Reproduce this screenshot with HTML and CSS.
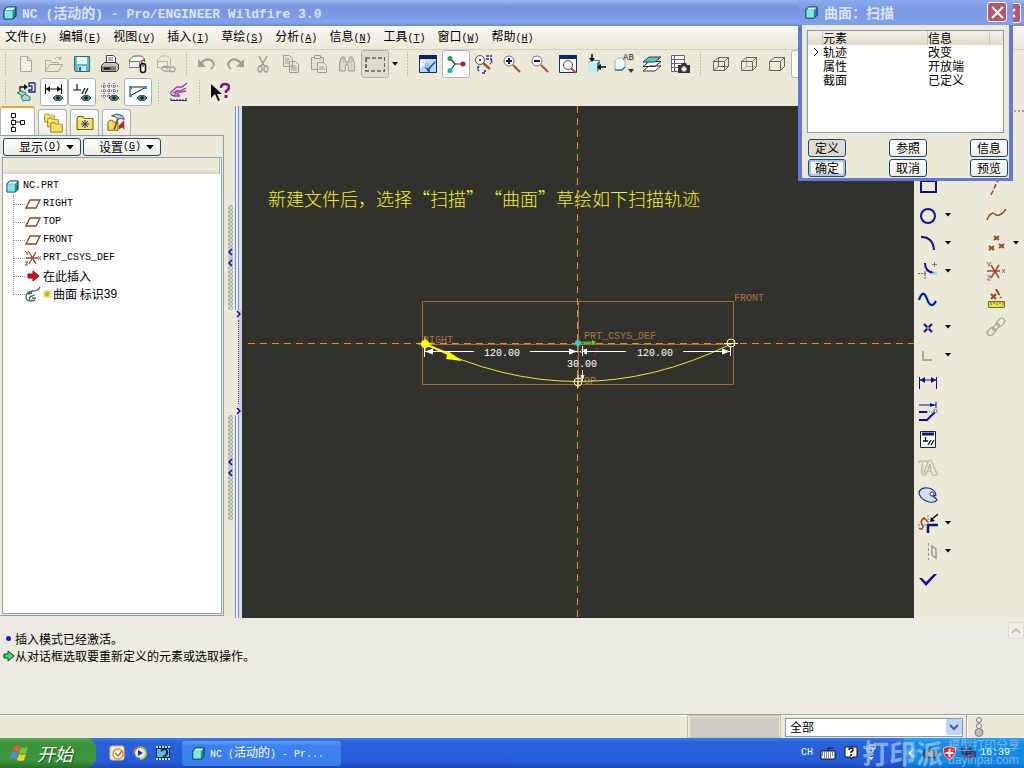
FILE: index.html
```html
<!DOCTYPE html>
<html lang="zh-CN">
<head>
    <meta charset="UTF-8">
    <meta name="viewport" content="width=device-width, initial-scale=1.0">
    <title>NC (活动的) - Pro/ENGINEER Wildfire 3.0</title>
    <link rel="stylesheet" href="styles.css">
</head>
<body>
    <!-- shared icons -->
    <svg class="sprite" aria-hidden="true">
        <symbol id="part" viewBox="0 0 14 14">
            <path d="M1 4l3-3h9v9l-3 3H1z" fill="#2a8f93" stroke="#123"/>
            <path d="M1.500 4.500h8v8h-8z" fill="#7fe9e4"/>
            <path d="M2 4l2-2.500h8.500L10 4z" fill="#d8ffff"/>
        </symbol>
        <symbol id="plane" viewBox="0 0 16 12">
            <path d="M5 2h10l-4 8H1z" fill="#fff" stroke="#8a4a28" stroke-width="1.300"/>
        </symbol>
        <symbol id="eye" viewBox="0 0 10 6">
            <path d="M0 3q5-6 10 0q-5 6-10 0z" fill="#5d8a8a" stroke="#244"/>
            <circle cx="5" cy="3" r="1.800" fill="#023"/>
        </symbol>
        <symbol id="arrow" viewBox="0 0 6 4">
            <path d="M0 0h6L3 3.500z" fill="#000"/>
        </symbol>
        <symbol id="folder" viewBox="0 0 18 15">
            <path d="M1 3l1-2h5l1 2h9v11H1z" fill="#f4e05a" stroke="#6b6010"/>
            <path d="M2 4h14" stroke="#fffbc0"/>
        </symbol>
        <symbol id="fold" viewBox="0 0 5 18">
            <path d="M4 1L1 4l3 3M4 12l-3 3 3 3" fill="none" stroke="#10108c" stroke-width="1.500"/>
        </symbol>
        <symbol id="unfold" viewBox="0 0 5 8">
            <path d="M1 1l3 3-3 3" fill="none" stroke="#10108c" stroke-width="1.500"/>
        </symbol>
    </svg>

    <header class="titlebar">
        <svg class="app-icon" viewBox="0 0 14 14"><use href="#part"/></svg>
        <h1><span class="en">NC (</span>活动的<span class="en">) - Pro/ENGINEER Wildfire 3.0</span></h1>
        <button class="close" aria-label="关闭窗口"><svg viewBox="0 0 12 12"><path d="M2 2l8 8M10 2l-8 8" stroke="#fff" stroke-width="2"/></svg></button>
    </header>

    <nav class="menubar">
        <button>文件<span class="en">(<u>F</u>)</span></button>
        <button>编辑<span class="en">(<u>E</u>)</span></button>
        <button>视图<span class="en">(<u>V</u>)</span></button>
        <button>插入<span class="en">(<u>I</u>)</span></button>
        <button>草绘<span class="en">(<u>S</u>)</span></button>
        <button>分析<span class="en">(<u>A</u>)</span></button>
        <button>信息<span class="en">(<u>N</u>)</span></button>
        <button>工具<span class="en">(<u>T</u>)</span></button>
        <button>窗口<span class="en">(<u>W</u>)</span></button>
        <button>帮助<span class="en">(<u>H</u>)</span></button>
    </nav>

    <div class="toolbars">
        <div class="toolbar">
            <i class="handle"></i>
            <button class="tool" aria-label="新建"><svg viewBox="0 0 20 20"><path d="M4.500 2.500h7l4 4v11h-11zM11.500 2.500v4h4" fill="#f2f0e4" stroke="#aaa89c"/></svg></button>
            <button class="tool" aria-label="打开"><svg viewBox="0 0 20 20"><path d="M1.500 17.500v-11h5l1 2h7v2M1.500 17.500l4-7h13l-4 7zM11 5q3-4 6 0M17 2v3h-3" fill="none" stroke="#aaa89c"/></svg></button>
            <button class="tool" aria-label="保存"><svg viewBox="0 0 20 20"><path d="M2.500 2.500h15v15h-14l-1-1z" fill="#62bcc0" stroke="#2a6b75"/><path d="M5 3h10v7H5z" fill="#e8f6f6"/><path d="M6 12h8v5H6z" fill="#cde"/><path d="M7 13h2v4H7z" fill="#2a6b75"/></svg></button>
            <button class="tool" aria-label="打印"><svg viewBox="0 0 20 20"><path d="M6.500 9V1.500h7l2 2V9" fill="#fff" stroke="#444"/><path d="M8 4h5M8 6h5" stroke="#667"/><path d="M1.500 11.500l3-3h11l3 2v5l-2 2h-15z" fill="#c4c4c0" stroke="#333"/><path d="M2 12.500h14v4H2z" fill="#77776f"/><path d="M4 14.500h6" stroke="#111" stroke-width="2"/><path d="M12 14.500h2" stroke="#e44"/></svg></button>
            <button class="tool" aria-label="发送邮件"><svg viewBox="0 0 20 20"><path d="M1.500 13.500V6l4-4h8l3 3v3" fill="#f7f7f4" stroke="#555"/><path d="M1.500 7.500h10v6h-10" fill="#eee" stroke="#777"/><path d="M16 6q-5 1-1 5" fill="none" stroke="#c22" stroke-width="1.500"/><rect x="12.500" y="9.500" width="5" height="9" rx="2.500" fill="#fff" stroke="#111" stroke-width="1.500"/><path d="M15 10v3" stroke="#111"/></svg></button>
            <button class="tool" aria-label="发送链接"><svg viewBox="0 0 20 20"><path d="M1.500 13.500V6l4-4h6l3 3v7M1.500 7.500h10v6h-10" fill="none" stroke="#b2b0a4"/><path d="M6 15q0-2.500 3-2.500h3q2 0 2 2.500t-2 2H9q-3 0-3-2zM11 15q0-2 2-2h3q3 0 3 2.500t-3 2h-3" fill="none" stroke="#a5a398" stroke-width="1.300"/></svg></button>
            <i class="sep"></i>
            <button class="tool" aria-label="撤消"><svg viewBox="0 0 20 20"><path d="M4 9q6-6 11-2 4 4-1 8" fill="none" stroke="#a09e93" stroke-width="2"/><path d="M1 5v8h8z" fill="#a09e93"/></svg></button>
            <button class="tool" aria-label="重做"><svg viewBox="0 0 20 20"><path d="M16 9q-6-6-11-2-4 4 1 8" fill="none" stroke="#a09e93" stroke-width="2"/><path d="M19 5v8h-8z" fill="#a09e93"/></svg></button>
            <button class="tool" aria-label="剪切"><svg viewBox="0 0 20 20"><path d="M6 2l6 11M14 2L8 13" stroke="#a09e93" stroke-width="1.500"/><ellipse cx="7" cy="15" rx="2" ry="3" fill="none" stroke="#a09e93" stroke-width="1.300"/><ellipse cx="13" cy="15" rx="2" ry="3" fill="none" stroke="#a09e93" stroke-width="1.300"/></svg></button>
            <button class="tool" aria-label="复制"><svg viewBox="0 0 20 20"><path d="M2.500 1.500h6l3 3v8h-9zM8.500 7.500h6l3 3v8h-9z" fill="#e8e6da" stroke="#a09e93"/><path d="M4 5h5M4 7h4M4 9h4M10 12h5M10 14h6M10 16h6" stroke="#a09e93"/></svg></button>
            <button class="tool" aria-label="粘贴"><svg viewBox="0 0 20 20"><path d="M2.500 3.500h12v12h-12z" fill="#e4e2d6" stroke="#a09e93"/><path d="M5.500 1.500h6v3h-6zM8.500 8.500h6l3 3v7h-9z" fill="#e8e6da" stroke="#a09e93"/><path d="M10 13h5M10 15h6" stroke="#a09e93"/></svg></button>
            <button class="tool" aria-label="查找"><svg viewBox="0 0 20 20"><path d="M2.500 9l2-6h3l1 5h3l1-5h3l2 6v8h-6v-6h-3v6h-6z" fill="#c9c7bb" stroke="#a09e93"/><path d="M5 6v10M7 9v7M13 9v7M16 8v8" stroke="#f4f2e8"/></svg></button>
            <button class="tool pressed" aria-label="选取框"><svg viewBox="0 0 20 20"><path d="M1 4h19v13H1z" fill="none" stroke="#222" stroke-width="1.200" stroke-dasharray="4 2"/></svg></button>
            <button class="drop" aria-label="选取选项"><svg viewBox="0 0 6 4"><use href="#arrow"/></svg></button>
            <i class="sep"></i>
            <button class="tool" aria-label="重画"><svg viewBox="0 0 20 20"><path d="M1.500 1.500h17v17h-17z" fill="#b8d8ee" stroke="#14306c"/><path d="M1 1h18v4H1z" fill="#0b2568"/><path d="M2 6h9L2 15z" fill="#f4fbff"/><path d="M10 18q-1-3-4-5l4 1 7-7 1 1-6 7v3z" fill="#2660ac"/><path d="M5 8l4 5M8 7l2 5" stroke="#3778b5" stroke-dasharray="1 1"/></svg></button>
            <button class="tool checked" aria-label="旋转中心"><svg viewBox="0 0 20 20"><path d="M4 4l5 6-5 7M9 10h8" fill="none" stroke="#333" stroke-width="1.200"/><circle cx="4" cy="4.500" r="2.500" fill="#1da33a"/><circle cx="4" cy="16.500" r="2.500" fill="#19bba4"/><circle cx="17" cy="10" r="2.500" fill="#b21a22"/></svg></button>
            <button class="tool" aria-label="定向模式"><svg viewBox="0 0 20 20"><circle cx="6" cy="6" r="4.500" fill="#eee" stroke="#555"/><circle cx="6" cy="6" r="1" fill="#111"/><path d="M9 9l7 6" stroke="#a3552c" stroke-width="2.500"/><path d="M12 2h6M12 5h6M17 6q2 2-1 4M5 12q-3 3 0 5M8 19h3v-3" fill="none" stroke="#1a2a9c" stroke-width="1.500" stroke-dasharray="3 1"/></svg></button>
            <button class="tool" aria-label="放大"><svg viewBox="0 0 20 20"><circle cx="7" cy="7" r="5" fill="#f4f8fb" stroke="#777"/><path d="M4 7h6M7 4v6" stroke="#111a50" stroke-width="2"/><path d="M11 11l7 7" stroke="#9a5634" stroke-width="2"/></svg></button>
            <button class="tool" aria-label="缩小"><svg viewBox="0 0 20 20"><circle cx="7" cy="7" r="5" fill="#f4f8fb" stroke="#777"/><path d="M4 7h6" stroke="#111a50" stroke-width="2"/><path d="M11 11l7 7" stroke="#9a5634" stroke-width="2"/></svg></button>
            <button class="tool" aria-label="重新调整"><svg viewBox="0 0 20 20"><path d="M1.500 1.500h17v17h-17z" fill="#fff" stroke="#14306c"/><path d="M1 1h18v4H1z" fill="#0b2568"/><circle cx="10" cy="11" r="4.500" fill="#eef3f5" stroke="#555"/><path d="M13 14l5 5" stroke="#8d5b43" stroke-width="2"/></svg></button>
            <button class="tool" aria-label="重定向"><svg viewBox="0 0 20 20"><path d="M2 9l3-3h9v9l-3 3H2z" fill="#2f9297"/><path d="M2 9h9v9H2z" fill="#b7f0ef"/><path d="M3 9l2-2h8l-2 2z" fill="#e8ffff"/><path d="M6 0v6M20 13h-7" stroke="#111" stroke-width="1.500"/><path d="M3 4h6L6 8zM15 10v6l-4-3z" fill="#111"/></svg></button>
            <button class="tool" aria-label="已命名视图"><svg viewBox="0 0 20 20"><path d="M1 7l3-3h7v9l-3 3H1z" fill="#e9fbfb" stroke="#9db5b8"/><path d="M1 16h7l3-3" fill="none" stroke="#3c7c80" stroke-width="1.500"/><text class="glyph" x="9" y="6">AB</text><path d="M14 15h6l-3 4z" fill="#333"/></svg></button>
            <button class="tool" aria-label="图层"><svg viewBox="0 0 20 20"><path d="M1 17l6-5h12l-6 5zM1 12.500l6-5h12l-6 5z" fill="#fff" stroke="#333"/><path d="M1 8l6-5h12l-6 5z" fill="#5ac9bd" stroke="#245"/></svg></button>
            <button class="tool" aria-label="视图管理器"><svg viewBox="0 0 20 20"><path d="M1.500 1.500h13v16h-13zM4.500 2v15M1.500 5.500h13M1.500 9.500h13M1.500 13.500h13" fill="#fff" stroke="#666"/><path d="M8 11h3l1-2h4l1 2h3v8H8z" fill="#333"/><circle cx="14" cy="15" r="2.500" fill="#eee" stroke="#999"/></svg></button>
            <i class="sep"></i>
            <button class="tool" aria-label="线框"><svg viewBox="0 0 20 20"><path d="M2.500 7.500h11v9h-11zM7.500 3.500h10v9h-10zM2.500 7.500l5-4M13.500 7.500l4-4M13.500 16.500l4-4M2.500 16.500l5-4" fill="none" stroke="#66645c"/></svg></button>
            <button class="tool" aria-label="隐藏线"><svg viewBox="0 0 20 20"><path d="M7.500 4v8.500h10M2.500 16.500l5-4" fill="none" stroke="#b0aea2"/><path d="M2.500 7.500h11v9h-11zM2.500 7.500l5-4h10v9l-4 4M13.500 7.500l4-4" fill="none" stroke="#66645c"/></svg></button>
            <button class="tool" aria-label="无隐藏线"><svg viewBox="0 0 20 20"><path d="M2.500 7.500h11v9h-11zM2.500 7.500l5-4h10v9l-4 4M13.500 7.500l4-4" fill="none" stroke="#66645c"/></svg></button>
            <button class="tool checked shade" aria-label="着色"><svg viewBox="0 0 14 14"><use href="#part"/></svg></button>
        </div>
        <div class="toolbar">
            <i class="handle"></i>
            <button class="tool" aria-label="草绘方向"><svg viewBox="0 0 20 20"><path d="M4 9V5h5" fill="none" stroke="#111" stroke-width="1.300"/><path d="M8 2l4 3-4 3z" fill="#111"/><path d="M13 1h6v9h-6V8h3V4h-3z" fill="#fff" stroke="#142a86" stroke-width="1.300"/><path d="M1 11l4-2 5 2-3 3zM5 15l4-3 5 3v3l-7 1z" fill="#9ddcd8" stroke="#377"/></svg></button>
            <button class="tool checked" aria-label="显示尺寸"><svg viewBox="0 0 20 20"><path d="M1.500 2v10M17.500 2v10M2 7h15" stroke="#111"/><path d="M2 7l4-3v6zM17 7l-4-3v6z" fill="#111"/><use href="#eye" x="9" y="13" width="10" height="6"/></svg></button>
            <button class="tool checked" aria-label="显示约束"><svg viewBox="0 0 20 20"><path d="M1 8h8M5 2v6M10 12l3-6M13 12l3-6" stroke="#111" stroke-width="1.200"/><use href="#eye" x="9" y="13" width="10" height="6"/></svg></button>
            <button class="tool" aria-label="显示栅格"><svg viewBox="0 0 20 20"><path d="M1 4h17M1 9h17M1 14h10M4 1v16M9 1v16M14 1v11" stroke="#2c2c70" stroke-dasharray="1 1"/><use href="#eye" x="9" y="13" width="10" height="6"/></svg></button>
            <button class="tool checked" aria-label="显示顶点"><svg viewBox="0 0 20 20"><path d="M2 5h16L2 14z" fill="none" stroke="#222"/><path d="M1 4h3v3H1zM16 4h3v3h-3zM1 12h3v3H1z" fill="#2f91c9"/><use href="#eye" x="9" y="13" width="10" height="6"/></svg></button>
            <i class="sep"></i>
            <button class="tool" aria-label="曲面分析"><svg viewBox="0 0 20 20"><path d="M2 10l6-5h5l5-4M2 10q-1 3 3 4h6M5 14l3-5h3l6-3M4 11l5-3M11 14l-3-2 3-2 6-1" fill="none" stroke="#a03ca8" stroke-width="1.300"/><path d="M2 16v3M5 17v2M8 17v2M11 17v2M14 17v2M17 16v3M2 18.500h16" stroke="#335"/></svg></button>
            <i class="sep"></i>
            <button class="tool" aria-label="上下文帮助"><svg viewBox="0 0 20 20"><path d="M1 2v14l4-4 3 7 2-1-3-6h5z" fill="#111"/><path d="M11 6q0-4 4-4t4 3.500q0 2-3 3.500v2" fill="none" stroke="#7c1583" stroke-width="2.500"/><path d="M14.500 13h3v3h-3z" fill="#7c1583"/></svg></button>
        </div>
    </div>

    <main class="workspace">
        <aside class="navigator">
            <div class="tabs">
                <button class="tab active" aria-label="模型树"><svg viewBox="0 0 18 20"><path d="M4 3v14M4 10h8" stroke="#222"/><path d="M2.500 1.500h4v4h-4zM2.500 8.500h4v4h-4zM2.500 15.500h4v4h-4zM11.500 8.500h4v4h-4z" fill="#fff" stroke="#111"/></svg></button>
                <button class="tab" aria-label="文件夹浏览器"><svg viewBox="0 0 20 20"><use href="#folder" x="1" y="0" width="11" height="10"/><use href="#folder" x="4" y="4" width="12" height="11"/><use href="#folder" x="7" y="9" width="13" height="11"/></svg></button>
                <button class="tab" aria-label="收藏夹"><svg viewBox="0 0 20 20"><use href="#folder" x="1" y="2" width="18" height="16"/><path d="M10 7v8M6 11h8M7 8l6 6M13 8l-6 6" stroke="#1729b0"/></svg></button>
                <button class="tab" aria-label="连接"><svg viewBox="0 0 22 20"><path d="M1 9l2-2h3l1 2h5v9H1z" fill="#f4e05a" stroke="#6b6010"/><path d="M5 2l6-2 6 2 2 4-4-1-3 1-3-3z" fill="#bcd" stroke="#345"/><path d="M12 5l-4 12" stroke="#964f2c" stroke-width="2"/><path d="M13 13l6-6v11l-2-3-4 2z" fill="#b5262a"/></svg></button>
            </div>
            <div class="nav-body">
                <div class="nav-buttons">
                    <button>显示<span class="en">(<u>O</u>)</span><svg viewBox="0 0 6 4"><use href="#arrow"/></svg></button>
                    <button>设置<span class="en">(<u>G</u>)</span><svg viewBox="0 0 6 4"><use href="#arrow"/></svg></button>
                </div>
                <div class="tree">
                    <div class="tree-head"></div>
                    <div class="tree-root"><svg viewBox="0 0 14 14"><use href="#part"/></svg><span class="en">NC.PRT</span></div>
                    <ul>
                        <li><svg viewBox="0 0 16 12"><use href="#plane"/></svg><span class="en">RIGHT</span></li>
                        <li><svg viewBox="0 0 16 12"><use href="#plane"/></svg><span class="en">TOP</span></li>
                        <li><svg viewBox="0 0 16 12"><use href="#plane"/></svg><span class="en">FRONT</span></li>
                        <li><svg viewBox="0 0 16 16"><path d="M1 8h12M4 2l7 12M11 2L4 14" stroke="#9a5026" stroke-width="1.300"/><path d="M0 1l2 2 2-2M2 3v2M0 12h3l-3 3h3M13 6l3 4M16 6l-3 4" fill="none" stroke="#666"/></svg><span class="en">PRT_CSYS_DEF</span></li>
                        <li><svg viewBox="0 0 16 16"><path d="M3 6h5V3l6 5-6 5v-3H3z" fill="#d5131b" stroke="#7b0a10"/></svg>在此插入</li>
                        <li><svg viewBox="0 0 16 16"><path d="M1 11q0-5 7-6 5 0 7-4M1 11q0 4 5 4l4-1M5 14q-2-3 2-4l3-1M3 8l4-1M7 12h4" fill="none" stroke="#3c6468" stroke-width="1.300"/></svg><svg class="star" viewBox="0 0 8 8"><path d="M4 0v8M0 4h8M1 1l6 6M7 1L1 7" stroke="#c5ba00" stroke-width="1.200"/></svg>曲面 标识<span class="num">39</span></li>
                    </ul>
                </div>
            </div>
        </aside>

        <div class="sash">
            <div class="sash-left">
                <button class="grip" aria-label="折叠导航器"><svg viewBox="0 0 5 18"><use href="#fold"/></svg></button>
                <button class="grip" aria-label="折叠浏览器"><svg viewBox="0 0 5 18"><use href="#fold"/></svg></button>
            </div>
            <div class="sash-right">
                <button class="expand" aria-label="展开浏览器"><svg viewBox="0 0 5 8"><use href="#unfold"/></svg><i></i><svg viewBox="0 0 5 8"><use href="#unfold"/></svg></button>
            </div>
        </div>

        <section class="canvas">
            <svg viewBox="0 0 672 512">
                <text class="note" x="26" y="100">新建文件后，选择“扫描”“曲面”草绘如下扫描轨迹</text>

                <!-- datum planes -->
                <path class="datum" d="M180.500 195.500h311v83h-311zM184 238.500h306M336.500 196v83"/>
                <path class="axis" d="M335.500 0v512M6 237.500h666"/>
                <text class="label" x="492" y="195">FRONT</text>
                <text class="label" x="181" y="237">RIGHT</text>
                <text class="label" x="342" y="233">PRT_CSYS_DEF</text>
                <text class="label" x="336" y="278">TOP</text>

                <!-- sweep trajectory -->
                <path class="curve" d="M183 238Q336 313 489 238"/>
                <path d="M183 238l26 11" stroke="#ffff00" stroke-width="2"/>
                <path d="M206 245l14 10-16-2z" fill="#ffff00"/>
                <circle cx="183" cy="238" r="4" fill="#ffff00"/>
                <path d="M176 238h14M183 231v14" stroke="#ffff00"/>
                <g fill="none" stroke="#ffffc8">
                    <circle cx="489" cy="237" r="4"/>
                    <path d="M482 237.500h14"/>
                    <circle cx="336" cy="276" r="4"/>
                    <path d="M336 269v13"/>
                </g>
                <circle cx="336" cy="237" r="3" fill="#25cfca"/>
                <path d="M339 236.500h14" stroke="#35b52c" stroke-width="2"/>
                <path d="M350 234l4 2.500-4 2.500z" fill="#56d81f"/>
                <path d="M353 242l3 5M356 242l-4 8M335.500 250v9" stroke="#a22440"/>

                <!-- dimensions -->
                <path class="dim" d="M182.500 241v10M183 245.500h49M288 245.500h48M340.500 240v10M340 245.500h44M441 245.500h48M488.500 240v10M340.500 264v11"/>
                <path d="M183 245.500l8-3v6zM335 245.500l-8-3v6zM337 245.500l8-3v6zM488 245.500l-8-3v6zM340.500 241l-2 6h4zM340.500 275l-2-6h4z" fill="#fff"/>
                <text class="value" x="242" y="250">120.00</text>
                <text class="value" x="395" y="250">120.00</text>
                <text class="value" x="325" y="261">30.00</text>
            </svg>
        </section>

        <aside class="sketch-tools">
            <div class="tool-col">
                <div class="row"><button class="tool" aria-label="矩形"><svg viewBox="0 0 20 20"><path d="M3 4h15v11H3z" fill="none" stroke="#10108c" stroke-width="2"/></svg></button></div>
                <div class="row"><button class="tool" aria-label="圆"><svg viewBox="0 0 20 20"><circle cx="10" cy="11" r="7" fill="none" stroke="#10108c" stroke-width="2"/></svg></button><button class="drop" aria-label="圆选项"><svg viewBox="0 0 6 4"><use href="#arrow"/></svg></button></div>
                <div class="row"><button class="tool" aria-label="圆弧"><svg viewBox="0 0 20 20"><path d="M3 4q12 0 13 13" fill="none" stroke="#10108c" stroke-width="2"/></svg></button><button class="drop" aria-label="圆弧选项"><svg viewBox="0 0 6 4"><use href="#arrow"/></svg></button></div>
                <div class="row"><button class="tool" aria-label="圆角"><svg viewBox="0 0 20 20"><path d="M7 2q0 9 9 10" fill="none" stroke="#10108c" stroke-width="2"/><path d="M0 12.500h8M7 10v9" stroke="#666" stroke-dasharray="2 1"/><path d="M14 3.500h5M16.500 1v5" stroke="#777"/><path d="M14 12.500h5" stroke="#6de0f0" stroke-width="2"/></svg></button><button class="drop" aria-label="圆角选项"><svg viewBox="0 0 6 4"><use href="#arrow"/></svg></button></div>
                <div class="row"><button class="tool" aria-label="样条"><svg viewBox="0 0 20 20"><path d="M1 11q4-12 8-1t9 2" fill="none" stroke="#9ceaf4" stroke-width="4"/><path d="M1 11q4-12 8-1t9 2" fill="none" stroke="#10108c" stroke-width="2"/></svg></button></div>
                <div class="row"><button class="tool" aria-label="点"><svg viewBox="0 0 20 20"><path d="M6 7l8 8M14 7l-8 8" stroke="#10108c" stroke-width="2"/><circle cx="10" cy="11" r="1" fill="#ece9d8"/></svg></button><button class="drop" aria-label="点选项"><svg viewBox="0 0 6 4"><use href="#arrow"/></svg></button></div>
                <div class="row"><button class="tool" aria-label="使用边"><svg viewBox="0 0 20 20"><path d="M5 6v9h9" fill="none" stroke="#aaa89c" stroke-width="2"/></svg></button><button class="drop" aria-label="使用边选项"><svg viewBox="0 0 6 4"><use href="#arrow"/></svg></button></div>
                <div class="row"><button class="tool" aria-label="尺寸"><svg viewBox="0 0 20 20"><path d="M1.500 4v12M18.500 4v12M2 7h16" stroke="#10108c"/><path d="M2 7l5-3v6zM18 7l-5-3v6z" fill="#10108c"/></svg></button></div>
                <div class="row"><button class="tool" aria-label="修改"><svg viewBox="0 0 20 20"><path d="M1 4h17M18 1v6" stroke="#10108c"/><path d="M12 2l5 2-5 2z" fill="#10108c"/><path d="M1 11h8M1 19h8l8-8" fill="none" stroke="#10108c" stroke-width="2"/><path d="M9 11h7" stroke="#777" stroke-dasharray="1 1"/><circle cx="17.500" cy="10" r="1.500" fill="#fff" stroke="#3a6ac0"/></svg></button></div>
                <div class="row"><button class="tool" aria-label="约束"><svg viewBox="0 0 20 20"><path d="M2.500 2.500h15v16h-15z" fill="#fff" stroke="#223"/><path d="M4 5h12" stroke="#10108c" stroke-width="3"/><path d="M5 12h5M7.500 8v4M10 16l3-5M13 16l3-5" stroke="#111" stroke-width="1.300"/></svg></button></div>
                <div class="row"><button class="tool" aria-label="文本"><svg viewBox="0 0 20 20"><path d="M1 6V4h8v2M4 5v12M6 17v-2l5-12h2l5 12h1v3h-5v-2l-1-2h-4l-1 4H4M10 12h3l-1-5z" fill="none" stroke="#aaa89c"/></svg></button></div>
                <div class="row"><button class="tool" aria-label="调色板"><svg viewBox="0 0 20 20"><path d="M1 7q2-5 9-4 7 1 8 7-1 1-3 1 3 2 4 4-2 3-8 2Q1 14 1 7z" fill="#cfe1ee" stroke="#1c3284" stroke-width="1.200"/><circle cx="14" cy="9" r="2" fill="#fff" stroke="#1c3284"/></svg></button></div>
                <div class="row"><button class="tool" aria-label="修剪"><svg viewBox="0 0 20 20"><path d="M1 15q4 3 4-2-4-5 1-8l4 4" fill="none" stroke="#a23e14" stroke-width="1.500"/><path d="M10 20v-8h10" fill="none" stroke="#10108c" stroke-width="2.500"/><path d="M0 12h9M10 2v9" stroke="#777" stroke-dasharray="2 1"/><path d="M20 1l-6 5" stroke="#111" stroke-width="1.500"/><path d="M12 9l1-5 4 4z" fill="#111"/></svg></button><button class="drop" aria-label="修剪选项"><svg viewBox="0 0 6 4"><use href="#arrow"/></svg></button></div>
                <div class="row"><button class="tool" aria-label="镜像"><svg viewBox="0 0 20 20"><path d="M10.500 2v17" stroke="#999" stroke-dasharray="3 2"/><path d="M14 5l4 3v9l-4-3z" fill="none" stroke="#a09e93" stroke-width="1.500"/></svg></button><button class="drop" aria-label="镜像选项"><svg viewBox="0 0 6 4"><use href="#arrow"/></svg></button></div>
                <div class="row"><button class="tool" aria-label="完成"><svg viewBox="0 0 20 20"><path d="M1 9h3l4 4 8-8h3L8 17z" fill="#10108c"/></svg></button></div>
            </div>
            <div class="tool-col">
                <div class="row"><button class="tool" aria-label="基准轴"><svg viewBox="0 0 20 20"><path d="M5 18L13 1" stroke="#8f4e24" stroke-width="1.500" stroke-dasharray="5 2"/></svg></button></div>
                <div class="row"><button class="tool" aria-label="基准曲线"><svg viewBox="0 0 20 20"><path d="M1 15q4-10 9-5 4 2 10-6" fill="none" stroke="#8f4e24" stroke-width="1.500"/></svg></button></div>
                <div class="row"><button class="tool" aria-label="基准点"><svg viewBox="0 0 20 20"><path d="M8 3l5 4M13 3l-5 4M3 13l5 4M8 13l-5 4M13 11l5 4M18 11l-5 4" stroke="#8f4e24" stroke-width="2"/></svg></button><button class="drop" aria-label="基准点选项"><svg viewBox="0 0 6 4"><use href="#arrow"/></svg></button></div>
                <div class="row"><button class="tool" aria-label="坐标系"><svg viewBox="0 0 20 20"><path d="M1 10h13M5 4l8 13M13 4L5 17" stroke="#9a5026" stroke-width="1.500"/><path d="M1 1l2 3 2-3M3 4v2M1 15h4l-4 4h4M16 8l3 4M19 8l-3 4" fill="none" stroke="#777"/></svg></button></div>
                <div class="row"><button class="tool" aria-label="参照"><svg viewBox="0 0 20 20"><path d="M5 5l5 5M10 5l-5 5M10 0l5 9" stroke="#8f4e24" stroke-width="2" stroke-dasharray="7 2"/><path d="M2.500 12.500h16v6h-16z" fill="#e5dc58" stroke="#777018"/><path d="M5 13v3M8 13v2M11 13v3M14 13v2M17 13v3" stroke="#777018"/></svg></button></div>
                <div class="row"><button class="tool" aria-label="链接"><svg viewBox="0 0 20 20"><g fill="none" stroke="#aaa89c" stroke-width="1.300" transform="rotate(-45 10 10)"><rect x="-1" y="7" width="9" height="6" rx="3"/><rect x="6" y="8" width="8" height="4" rx="2"/><rect x="12" y="7" width="9" height="6" rx="3"/></g></svg></button></div>
            </div>
        </aside>
    </main>

    <section class="messages">
        <div class="message-list">
            <p><i class="bullet"></i>插入模式已经激活。</p>
            <p><svg viewBox="0 0 12 12"><path d="M1 4h4V1l6 5-6 5V8H1z" fill="#3fe070" stroke="#0b3c12"/></svg>从对话框选取要重新定义的元素或选取操作。</p>
        </div>
        <button class="scroll-up" aria-label="向上滚动"><svg viewBox="0 0 10 6"><path d="M1 5l4-4 4 4" fill="none" stroke="#c0beb2" stroke-width="2"/></svg></button>
    </section>

    <footer class="statusbar">
        <div class="selection-count"></div>
        <div class="filter">
            <select aria-label="选取过滤器">
                <option>全部</option>
            </select>
        </div>
        <div class="signal"><svg viewBox="0 0 12 20"><circle cx="6" cy="3" r="2.500" fill="#eee" stroke="#777"/><circle cx="6" cy="9" r="2.500" fill="#eee" stroke="#777"/><circle cx="6" cy="15.500" r="4" fill="#bbb" stroke="#777"/></svg></div>
    </footer>

    <div class="taskbar">
        <button class="start"><svg viewBox="0 0 20 18"><path d="M4 2q3-2 6 0L8 8q-3-2-6 0z" fill="#ee5a28"/><path d="M11 3q3 2 7 0l-2 6q-3 2-7 0z" fill="#7cc33c"/><path d="M2 9q3-2 6 0l-2 6q-3-2-6 0z" fill="#4a8df0"/><path d="M9 10q3 2 7 0l-2 6q-3 2-7 0z" fill="#ffd02e"/></svg>开始</button>
        <div class="quick">
            <button aria-label="邮件"><svg viewBox="0 0 16 16"><rect x="1" y="1" width="14" height="14" rx="2" fill="#f6ead0" stroke="#e0b878"/><circle cx="9" cy="9" r="5" fill="#fff" stroke="#e09426" stroke-width="1.500"/><path d="M6 8l3 3 4-5" fill="none" stroke="#c86c14" stroke-width="1.500"/></svg></button>
            <button aria-label="播放器"><svg viewBox="0 0 16 16"><path d="M8 1a7 7 0 0 1 7 7H8z" fill="#7cc14c"/><path d="M15 8a7 7 0 0 1-7 7V8z" fill="#efb530"/><path d="M8 15a7 7 0 0 1-7-7h7z" fill="#326bc2"/><path d="M1 8a7 7 0 0 1 7-7v7z" fill="#e26337"/><circle cx="8" cy="8" r="5" fill="#e8f1fb"/><path d="M6 5l5 3-5 3z" fill="#163a94"/></svg></button>
            <button aria-label="影音"><svg viewBox="0 0 16 16"><path d="M1 1h14v14H1z" fill="#0b2a58"/><path d="M1 2h14M1 14h14" stroke="#bfe6f4" stroke-width="2" stroke-dasharray="2 1"/><path d="M2 4h12v8H2z" fill="#66b8d8"/><path d="M6 6q4-4 6 0 1 4-4 6" fill="none" stroke="#0b2a58" stroke-width="2"/></svg></button>
        </div>
        <button class="task"><svg viewBox="0 0 14 14"><use href="#part"/></svg><span><span class="en">NC (</span>活动的<span class="en">) - Pr...</span></span></button>
        <div class="lang">
            <span class="en">CH</span>
            <svg viewBox="0 0 16 14"><path d="M1 5h14v8H1z" fill="#fff" stroke="#111"/><path d="M2 7h12M2 9h12M4 11h8" fill="none" stroke="#111" stroke-dasharray="1 1"/><path d="M8 5V2h5" fill="none" stroke="#111"/></svg>
            <svg viewBox="0 0 14 14"><path d="M1 1h12v10H9l-2 2v-2H1z" fill="#fffbe0" stroke="#111"/><path d="M5 4q0-2 2-2t2 2q0 1-2 2v1M7 8v2" fill="none" stroke="#111" stroke-width="1.500"/></svg>
            <svg class="restore" viewBox="0 0 10 18"><path d="M3 1h6v4H3zM1 4h6v4H1z" fill="#2a62d8" stroke="#fff"/><path d="M2 13h6l-3 3z" fill="#fff"/></svg>
        </div>
        <div class="tray">
            <svg viewBox="0 0 14 14"><circle cx="7" cy="7" r="6" fill="#3b9cf0"/><path d="M9 3L5 7l4 4" fill="none" stroke="#fff" stroke-width="2"/></svg>
            <svg viewBox="0 0 16 14"><path d="M1 4h5V2h4v2h5v8H1z" fill="#556b5a" stroke="#234"/><circle cx="8" cy="8" r="3" fill="#9ab"/></svg>
            <svg viewBox="0 0 14 14"><path d="M7 0l6 2q1 8-6 12Q0 10 1 2z" fill="#d22a2e" stroke="#fbb"/><path d="M7 3v8M3 7h8" stroke="#fff" stroke-width="2"/></svg>
            <svg viewBox="0 0 16 14"><path d="M1 1h9v7H1zM6 5h9v7H6z" fill="#445a9c" stroke="#223"/><path d="M3 11h4" stroke="#c33" stroke-width="2"/></svg>
            <time class="en">16:39</time>
        </div>
        <div class="watermark">
            <strong>打印派</strong>
            <span>模型打印分享<br>dayinpai.com</span>
        </div>
    </div>

    <div class="dialog" role="dialog" aria-labelledby="dialog-title">
        <div class="dialog-title">
            <svg viewBox="0 0 14 14"><use href="#part"/></svg>
            <h2 id="dialog-title">曲面：扫描</h2>
            <button class="close" aria-label="关闭"><svg viewBox="0 0 12 12"><path d="M1 1l10 10M11 1L1 11" stroke="#fff" stroke-width="2"/></svg></button>
        </div>
        <div class="dialog-body">
            <div class="element-list">
                <table>
                    <thead>
                        <tr><th class="mark"></th><th>元素</th><th class="info">信息</th><th class="rest"></th></tr>
                    </thead>
                    <tbody>
                        <tr><td><svg viewBox="0 0 6 8"><path d="M1 0l4 4-4 4" fill="none" stroke="#111"/></svg></td><td>轨迹</td><td>改变</td><td></td></tr>
                        <tr><td></td><td>属性</td><td>开放端</td><td></td></tr>
                        <tr><td></td><td>截面</td><td>已定义</td><td></td></tr>
                    </tbody>
                </table>
            </div>
            <div class="dialog-buttons">
                <button class="down">定义</button>
                <button>参照</button>
                <button>信息</button>
                <button class="default">确定</button>
                <button>取消</button>
                <button>预览</button>
            </div>
        </div>
    </div>
</body>
</html>
```
FILE: styles.css
```css
* {
    box-sizing: border-box;
}

body {
    margin: 0;
    min-height: 100vh;
    display: flex;
    flex-direction: column;
    position: relative;
    background-color: #ece9d8;
    color: #000;
    font-family: "Noto Sans CJK SC", sans-serif;
    font-size: 12px;
    line-height: 16px;
}

button, select {
    font: inherit;
    color: inherit;
}

button {
    padding: 0;
    border: none;
    background: none;
    cursor: pointer;
}

h1, h2, p, ul {
    margin: 0;
    padding: 0;
}

svg {
    display: block;
    flex: none;
}

/* latin text is half the width of a chinese character */
.en {
    font-family: "Liberation Mono", monospace;
    font-size: 10px;
}

.sprite {
    position: absolute;
    width: 0;
    height: 0;
}

/* title bar */
.titlebar {
    display: flex;
    align-items: center;
    height: 26px;
    padding: 0 3px;
    gap: 5px;
    background: linear-gradient(#9bb8f0, #7896df 25%, #7c9ae2 65%, #82a6ec 85%, #6a86d8);
}

.app-icon {
    width: 14px;
    height: 14px;
}

.titlebar h1 {
    flex: 1;
    color: #dbe6fc;
    font-size: 14px;
    font-weight: bold;
    line-height: 20px;
    white-space: pre;
}

.titlebar h1 .en {
    font-size: 13px;
}

.close {
    display: flex;
    align-items: center;
    justify-content: center;
    width: 20px;
    height: 20px;
    border: 1px solid #fff;
    border-radius: 3px;
    background-color: #b5566a;
}

.close svg {
    width: 12px;
    height: 12px;
}

/* menu */
.menubar {
    display: flex;
    gap: 12px;
    height: 24px;
    padding: 0 5px 1px;
    background: linear-gradient(#f8f8f4, #ece9d8);
    border-bottom: 1px solid #d4d1c0;
}

.menubar button {
    white-space: nowrap;
}

/* toolbars */
.toolbar {
    display: flex;
    align-items: center;
    height: 28px;
    padding-left: 4px;
}

.handle, .sep {
    flex: none;
    height: 24px;
    background: radial-gradient(circle, #8f8c7e 1px, transparent 1px) center / 3px 3px repeat-y;
}

.handle {
    width: 8px;
    background-position: left center;
}

.sep {
    width: 13px;
}

.tool {
    display: flex;
    flex: none;
    align-items: center;
    justify-content: center;
    width: 28px;
    height: 28px;
    border: 1px solid transparent;
    border-radius: 3px;
}

.tool svg {
    width: 20px;
    height: 20px;
}

.tool.shade svg {
    width: 14px;
    height: 14px;
}

.checked {
    background-color: #fff;
    border-color: #9db4cf;
}

.pressed {
    background-color: #dedccc;
    border-color: #a8b0ae;
}

.drop {
    width: 12px;
    height: 28px;
}

.drop svg {
    width: 6px;
    height: 4px;
    margin: 0 auto;
}

.glyph {
    font-family: "Liberation Mono", monospace;
    font-size: 9px;
    fill: #222;
}

/* main area */
.workspace {
    flex: 1;
    display: flex;
    min-height: 0;
}

.navigator {
    flex: none;
    display: flex;
    flex-direction: column;
    width: 224px;
    padding-bottom: 2px;
}

.tabs {
    display: flex;
    align-items: flex-end;
    gap: 3px;
    height: 29px;
}

.tab {
    display: flex;
    align-items: center;
    justify-content: center;
    width: 29px;
    height: 26px;
    border: 1px solid #a9b5b8;
    border-bottom: none;
    border-radius: 3px 3px 0 0;
    background: linear-gradient(#fff, #eeebdd);
}

.tab.active {
    width: 35px;
    height: 29px;
    border-top: 2px solid #efa432;
    background: #fff;
}

.tab svg {
    width: 20px;
    height: 20px;
}

.nav-body {
    flex: 1;
    display: flex;
    flex-direction: column;
    border: 1px solid #8c9fae;
    border-left: none;
    padding: 2px 1px 1px 2px;
}

.nav-buttons {
    display: flex;
    gap: 2px;
    padding: 0 0 1px 1px;
}

.nav-buttons button {
    display: flex;
    align-items: center;
    justify-content: flex-end;
    width: 78px;
    height: 18px;
    padding: 0 6px;
    border: 1px solid #1c4a74;
    border-radius: 3px;
    background: linear-gradient(#fff, #f0eee4);
}

.nav-buttons svg {
    width: 8px;
    height: 5px;
    margin-left: 5px;
}

.tree {
    flex: 1;
    border: 1px solid #8fa3b5;
    background-color: #fff;
}

.tree-head {
    height: 16px;
    margin-bottom: 3px;
    background: linear-gradient(#ece9d8 75%, #d6d2c0);
    border-right: 2px groove #fff;
}

.tree-root {
    display: flex;
    align-items: center;
    gap: 4px;
    height: 18px;
    padding-left: 3px;
}

.tree-root svg {
    width: 13px;
    height: 13px;
}

.tree ul {
    list-style: none;
    margin-left: 10px;
    border-left: 1px dotted #999;
    height: 100px;
}

.tree li {
    display: flex;
    align-items: center;
    height: 18px;
    white-space: pre;
}

.tree li::before {
    content: "";
    width: 11px;
    border-top: 1px dotted #999;
}

.tree li svg {
    width: 16px;
    height: 16px;
    margin-right: 2px;
}

.tree li .star {
    width: 8px;
    height: 8px;
}

.num {
    font-family: "Liberation Sans", sans-serif;
}

.sash {
    flex: none;
    display: flex;
    width: 18px;
    padding-left: 4px;
}

.sash-left {
    display: flex;
    flex-direction: column;
    justify-content: center;
    gap: 105px;
    width: 6px;
}

.grip {
    height: 105px;
    width: 5px;
    background: repeating-conic-gradient(#b0aea6 0 25%, #dcdace 0 50%) 0 0 / 4px 4px;
}

.grip svg {
    width: 5px;
    height: 18px;
    background-color: #c3c3d0;
}

.sash-right {
    flex: 1;
    display: flex;
    flex-direction: column;
    justify-content: center;
    background: linear-gradient(90deg, #d9e3f0 1px, #7f97c4 1px 2px, #e4ebf5 2px 4px, #7f97c4 4px 5px, #d3deef 5px);
}

.expand {
    display: flex;
    flex-direction: column;
    align-items: center;
    justify-content: space-between;
    height: 105px;
    width: 8px;
    background: linear-gradient(90deg, #ece9d8 4px, #c9cee0 4px);
}

.expand svg {
    width: 5px;
    height: 8px;
}

.expand i {
    height: 84px;
    border-left: 1px dotted #445;
}

.canvas {
    flex: 1;
    min-width: 0;
    background-color: #32322d;
}

.canvas svg {
    width: 100%;
    height: 100%;
}

.canvas text {
    font-family: "Liberation Mono", monospace;
    font-size: 10px;
}

.canvas .note {
    font-family: "Noto Sans CJK SC", sans-serif;
    font-size: 18px;
    font-weight: 300;
    text-spacing-trim: space-all;
    fill: #f2f21c;
}

.canvas .label {
    fill: #a8763e;
}

.canvas .value {
    fill: #fff;
}

.datum {
    fill: none;
    stroke: #9c6c3c;
}

.canvas .axis {
    fill: none;
    stroke: #f58a1f;
    stroke-dasharray: 7 5;
}

.curve {
    fill: none;
    stroke: #e8e83a;
}

.dim {
    fill: none;
    stroke: #fff;
}

.sketch-tools {
    flex: none;
    display: flex;
    gap: 28px;
    width: 110px;
    margin-top: 4px;
    padding-top: 61px;
    border-top: 2px dotted #a5a294;
}

.tool-col .row {
    display: flex;
    height: 28px;
}

/* messages */
.messages {
    display: flex;
    justify-content: space-between;
    height: 96px;
    background-color: #ebebe2;
}

.message-list {
    padding: 12px 3px;
}

.message-list p {
    display: flex;
    align-items: center;
    height: 17px;
}

.message-list svg {
    width: 12px;
    height: 12px;
}

.bullet {
    width: 5px;
    height: 5px;
    margin: 0 4px 0 3px;
    border-radius: 50%;
    background-color: #1a1ad0;
}

.scroll-up {
    width: 16px;
    height: 17px;
    margin-top: 4px;
    border: 1px solid #dbd9cc;
    border-radius: 2px;
    background-color: #f1f0e8;
}

.scroll-up svg {
    width: 10px;
    height: 6px;
    margin: 0 auto;
}

/* status bar */
.statusbar {
    display: flex;
    justify-content: flex-end;
    height: 24px;
    border-top: 1px solid #a3a194;
    box-shadow: inset 0 1px #fff;
}

.selection-count {
    width: 94px;
    border: solid #ece9d8;
    border-width: 2px 2px 1px 3px;
    background-color: #d1ccc4;
    outline: 1px solid #c5c2b2;
    outline-offset: -1px;
}

.filter {
    display: flex;
    align-items: center;
    padding: 1px 3px 0 4px;
    border-right: 2px groove #fff;
}

.filter select {
    appearance: none;
    width: 178px;
    height: 19px;
    padding: 0 4px;
    border: 1px solid #7f9db9;
    border-radius: 0;
    background: url("data:image/svg+xml,%3Csvg xmlns='http://www.w3.org/2000/svg' width='16' height='16'%3E%3Crect width='16' height='16' rx='2' fill='%23c1d3fb'/%3E%3Cpath d='M4 6l4 4 4-4' fill='none' stroke='%234d6185' stroke-width='2'/%3E%3C/svg%3E") right center no-repeat #fff;
}

.signal {
    width: 56px;
    padding: 2px 5px;
}

.signal svg {
    width: 12px;
    height: 20px;
}

/* taskbar */
.taskbar {
    display: flex;
    align-items: stretch;
    position: relative;
    height: 30px;
    background: linear-gradient(#3a7ae6, #2963dc 15%, #245cd8 80%, #1c48b0);
    color: #fff;
}

.start {
    display: flex;
    align-items: center;
    gap: 7px;
    width: 96px;
    padding-left: 10px;
    border-radius: 0 10px 10px 0;
    background: linear-gradient(#5aa957, #3a943b 20%, #3c963c 75%, #25702a);
    font-size: 18px;
    font-style: italic;
    text-shadow: 1px 1px 1px #1c4a1c;
}

.start svg {
    width: 20px;
    height: 18px;
}

.quick {
    display: flex;
    align-items: center;
    gap: 7px;
    width: 86px;
    padding-left: 13px;
}

.quick svg {
    width: 16px;
    height: 16px;
}

.task {
    display: flex;
    align-items: center;
    gap: 5px;
    width: 159px;
    margin: 3px 0 2px;
    padding-left: 10px;
    border-radius: 3px;
    background: linear-gradient(#5c9bf6, #3c80ee 20%, #3a7cec);
    white-space: pre;
}

.task svg {
    width: 13px;
    height: 13px;
}

.lang {
    display: flex;
    align-items: center;
    gap: 7px;
    margin-left: auto;
    padding-right: 28px;
}

.lang svg {
    width: 16px;
    height: 14px;
}

.lang .restore {
    width: 10px;
    height: 18px;
}

.tray {
    display: flex;
    align-items: center;
    gap: 4px;
    width: 120px;
    background: linear-gradient(#2ba3f2, #138be8 20%, #118ae6 80%, #0d6fc6);
}

.tray svg {
    width: 15px;
    height: 14px;
}

.watermark {
    display: flex;
    align-items: center;
    gap: 5px;
    position: absolute;
    right: 0;
    top: 0;
    color: #a9c8ef;
    opacity: 0.7;
    pointer-events: none;
}

.watermark strong {
    font-size: 27px;
    line-height: 30px;
}

.watermark span {
    width: 76px;
    font-family: "Liberation Sans", "Noto Sans CJK SC", sans-serif;
    font-size: 12px;
    line-height: 14px;
    white-space: nowrap;
}

/* element dialog */
.dialog {
    position: absolute;
    top: 0;
    right: 11px;
    width: 215px;
    padding: 0 4px 3px;
    background-color: #6478d4;
}

.dialog-title {
    display: flex;
    align-items: center;
    gap: 6px;
    height: 25px;
    margin: 0 -4px;
    padding: 0 6px 1px 7px;
    background: linear-gradient(#8dabee, #7a97e2 40%, #7fa0ea);
}

.dialog-title svg {
    width: 13px;
    height: 13px;
}

.dialog-title h2 {
    flex: 1;
    color: #dbe6fc;
    font-size: 14px;
    line-height: 20px;
}

.dialog-body {
    padding: 5px 1px 1px 5px;
    background-color: #ece9d8;
}

.element-list {
    height: 103px;
    margin-right: 4px;
    border: 1px solid #7f9db9;
    background-color: #fff;
}

.element-list table {
    width: 100%;
    border-collapse: collapse;
    table-layout: fixed;
}

.element-list tr {
    height: 14px;
}

.element-list th, .element-list td {
    padding: 0;
    line-height: 14px;
    font-weight: normal;
    text-align: left;
}

.element-list thead {
    background: linear-gradient(#f4f2e8, #e0ddcc);
}

.element-list th + th {
    box-shadow: -1px 0 #c8c5b4;
}

.element-list .mark {
    width: 15px;
}

.element-list .info {
    width: 62px;
}

.element-list .rest {
    width: 13px;
}

.element-list td svg {
    width: 6px;
    height: 8px;
    margin: 0 auto;
}

.dialog-buttons {
    display: grid;
    grid-template-columns: 38px 38px 38px;
    justify-content: space-between;
    row-gap: 2px;
    padding: 6px 0 0 1px;
}

.dialog-buttons button {
    height: 18px;
    border: 1px solid #1c4a74;
    border-radius: 3px;
    background: linear-gradient(#fff, #f0eee4);
    line-height: 16px;
}

.dialog-buttons .down {
    background: #e0ddd0;
}

.dialog-buttons .default {
    box-shadow: inset 0 0 0 2px #a9c4f0;
}
```
